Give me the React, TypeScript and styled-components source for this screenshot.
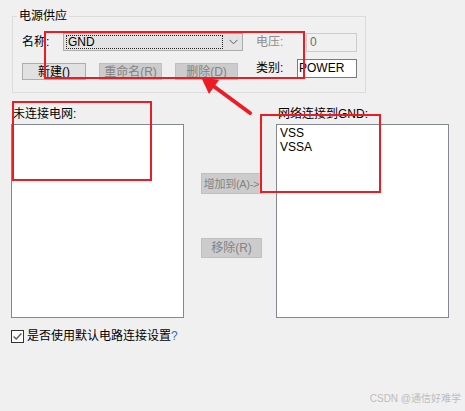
import styled, { createGlobalStyle } from "styled-components"

const GlobalStyle = createGlobalStyle`
    body {
        margin: 0;
        background: #f0f0f0;
        font-family: "Liberation Sans", "Noto Sans CJK SC", sans-serif;
        font-size: 12px;
        color: #000;
    }
`

const connectedNets = ["VSS", "VSSA"]

function ChevronDown(){
    return (
        <svg width="9" height="6" viewBox="0 0 9 6">
            <path d="M0.5 0.8 L4.5 4.8 L8.5 0.8" fill="none" stroke="#5a5a5a" strokeWidth="1" />
        </svg>
    )
}

function CheckMark(){
    return (
        <svg width="13" height="13" viewBox="0 0 13 13">
            <rect x="0.5" y="0.5" width="12" height="12" fill="#fdfdfd" stroke="#333" />
            <path d="M2.6 6.4 L5.2 9 L10.4 3.4" fill="none" stroke="#5c5c5c" strokeWidth="1.4" />
        </svg>
    )
}

function PointerArrow(){
    return (
        <ArrowLayer width="465" height="411" viewBox="0 0 465 411">
            <line x1="250" y1="113" x2="212" y2="85" stroke="#ec1c24" strokeWidth="4" strokeLinecap="round" />
            <polygon points="201,77 219,80 209,94" fill="#ec1c24" />
        </ArrowLayer>
    )
}

function App(){
    return (
        <Page>
            <GlobalStyle />

            <GroupBox>
                <GroupTitle>电源供应</GroupTitle>
                <Row>
                    <Label $width={41}>名称:</Label>
                    <Combo>
                        <ComboValue>GND</ComboValue>
                        <ChevronDown />
                    </Combo>
                    <Label $width={50} $disabled $gap={13}>电压:</Label>
                    <TextBox $width={51} $disabled>0</TextBox>
                </Row>
                <Row $top={7}>
                    <Button $width={64}>新建()</Button>
                    <Button $width={63} $disabled $gap={13}>重命名(R)</Button>
                    <Button $width={63} $disabled $gap={13}>删除(D)</Button>
                    <Label $width={41} $gap={18}>类别:</Label>
                    <TextBox $width={60}>POWER</TextBox>
                </Row>
            </GroupBox>

            <Lists>
                <ListColumn>
                    <ListLabel>未连接电网:</ListLabel>
                    <ListBox />
                </ListColumn>

                <MiddleColumn>
                    <Button $width={61} $height={21} $disabled $top={68} $tight>增加到(A)-&gt;</Button>
                    <Button $width={61} $height={20} $disabled $top={44}>移除(R)</Button>
                </MiddleColumn>

                <ListColumn $gap={14}>
                    <ListLabel>网络连接到GND:</ListLabel>
                    <ListBox>
                        {connectedNets.map(net => <ListItem key={net}>{net}</ListItem>)}
                    </ListBox>
                </ListColumn>
            </Lists>

            <CheckRow>
                <CheckMark />
                <span>是否使用默认电路连接设置<Help>?</Help></span>
            </CheckRow>

            <Mark $left={44} $top={31} $width={261} $height={48} />
            <Mark $left={12} $top={101} $width={140} $height={80} />
            <Mark $left={260} $top={114} $width={121} $height={79} />
            <PointerArrow />

            <Watermark>CSDN @通信好难学</Watermark>
        </Page>
    )
}

export default App

const Page = styled.div`
    position: relative;
    width: 465px;
    height: 411px;
    overflow: hidden;
    background: #f0f0f0;
    padding-top: 16px;
    box-sizing: border-box;
`

const GroupBox = styled.div`
    margin-left: 12px;
    width: 354px;
    height: 77px;
    box-sizing: border-box;
    border: 1px solid #dcdcdc;
    padding-left: 9px;
`

const GroupTitle = styled.div`
    width: fit-content;
    margin: -8px 0 0 -5px;
    padding: 0 2px;
    background: #f0f0f0;
    line-height: 15px;
`

const Row = styled.div<{ $top?: number }>`
    display: flex;
    align-items: flex-start;
    margin-top: ${p => p.$top ?? 9}px;
    height: ${p => p.$top ? 21 : 19}px;
`

const Label = styled.div<{ $width: number, $disabled?: boolean, $gap?: number }>`
    width: ${p => p.$width}px;
    flex: none;
    margin-left: ${p => p.$gap ?? 0}px;
    line-height: 19px;
    color: ${p => p.$disabled ? "#8d8d8d" : "#000"};
`

const Combo = styled.div`
    width: 180px;
    height: 18px;
    flex: none;
    box-sizing: border-box;
    border: 1px solid #adadad;
    background: #e3e3e3;
    display: flex;
    align-items: center;
    padding: 0 4px 0 2px;
    gap: 6px;
`

const ComboValue = styled.div`
    flex: 1;
    height: 14px;
    box-sizing: border-box;
    border: 1px dotted #222;
    line-height: 12px;
    padding-left: 1px;
`

const TextBox = styled.div<{ $width: number, $disabled?: boolean }>`
    width: ${p => p.$width}px;
    height: 19px;
    flex: none;
    box-sizing: border-box;
    border: 1px solid ${p => p.$disabled ? "#cccccc" : "#7a7a7a"};
    background: ${p => p.$disabled ? "#f0f0f0" : "#fff"};
    color: ${p => p.$disabled ? "#6d6d6d" : "#000"};
    line-height: 17px;
    padding-left: ${p => p.$disabled ? 3 : 1}px;
`

const Button = styled.div<{ $width: number, $height?: number, $disabled?: boolean, $gap?: number, $top?: number, $tight?: boolean }>`
    width: ${p => p.$width}px;
    height: ${p => p.$height ?? 17}px;
    flex: none;
    box-sizing: border-box;
    margin-left: ${p => p.$gap ?? 0}px;
    margin-top: ${p => p.$top ?? 4}px;
    border: 1px solid ${p => p.$disabled ? "#bfbfbf" : "#adadad"};
    background: ${p => p.$disabled ? "#cccccc" : "#e1e1e1"};
    color: ${p => p.$disabled ? "#838383" : "#000"};
    display: flex;
    align-items: center;
    justify-content: center;
    white-space: nowrap;
    overflow: hidden;
    line-height: 14px;
    font-size: ${p => p.$tight ? 11 : 12}px;
    letter-spacing: ${p => p.$tight ? -0.3 : 0}px;
`

const Lists = styled.div`
    display: flex;
    align-items: flex-start;
    margin-top: 12px;
    padding-left: 11px;
`

const ListColumn = styled.div<{ $gap?: number }>`
    width: 173px;
    margin-left: ${p => p.$gap ?? 0}px;
`

const ListLabel = styled.div`
    line-height: 16px;
    padding: 1px 0 0 2px;
    margin-bottom: -1px;
    white-space: nowrap;
`

const ListBox = styled.div`
    margin-top: 3px;
    height: 194px;
    box-sizing: border-box;
    border: 1px solid #828790;
    background: #fff;
    padding: 1px 3px;
`

const ListItem = styled.div`
    line-height: 14px;
`

const MiddleColumn = styled.div`
    width: 61px;
    margin-left: 17px;
    display: flex;
    flex-direction: column;
`

const CheckRow = styled.div`
    display: flex;
    align-items: center;
    gap: 3px;
    margin-top: 11px;
    padding-left: 11px;
    line-height: 15px;
`

const Help = styled.span`
    color: #2f6db5;
`

const Mark = styled.div<{ $left: number, $top: number, $width: number, $height: number }>`
    position: absolute;
    left: ${p => p.$left}px;
    top: ${p => p.$top}px;
    width: ${p => p.$width}px;
    height: ${p => p.$height}px;
    box-sizing: border-box;
    border: 2px solid #ec1c24;
`

const ArrowLayer = styled.svg`
    position: absolute;
    left: 0;
    top: 0;
    pointer-events: none;
`

const Watermark = styled.div`
    position: absolute;
    right: 4px;
    bottom: 6px;
    font-size: 10px;
    color: #bdbdbd;
    line-height: 12px;
`
